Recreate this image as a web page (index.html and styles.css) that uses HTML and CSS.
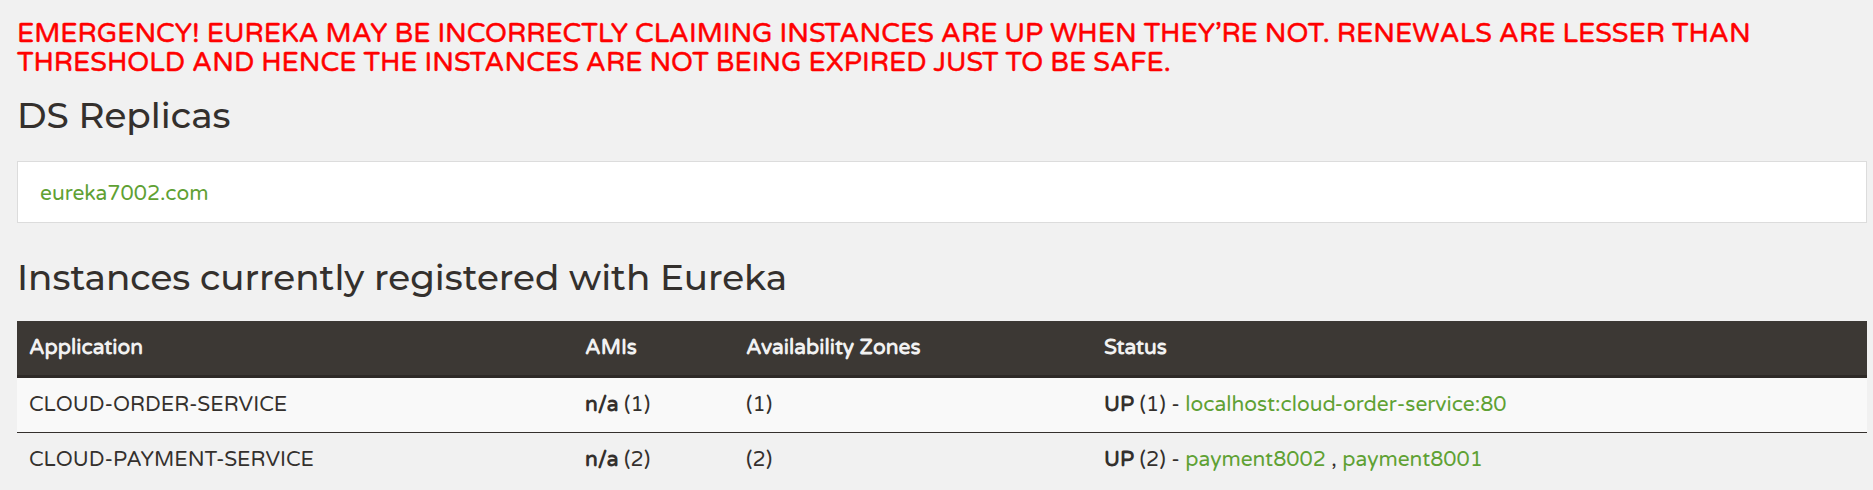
FILE: index.html
```html
<!DOCTYPE html>
<html lang="en">
<head>
<meta charset="utf-8">
<title>Eureka</title>
<link rel="stylesheet" href="styles.css">
</head>
<body>
<div class="page">
  <h4 class="emergency"><b>EMERGENCY! EUREKA MAY BE INCORRECTLY CLAIMING INSTANCES ARE UP WHEN THEY’RE NOT. RENEWALS ARE LESSER THAN THRESHOLD AND HENCE THE INSTANCES ARE NOT BEING EXPIRED JUST TO BE SAFE.</b></h4>

  <h1 class="title title-replicas">DS Replicas</h1>
  <div class="well">
    <ul class="list-unstyled">
      <li><a class="link" href="#">eureka7002.com</a></li>
    </ul>
  </div>

  <h1 class="title title-instances">Instances currently registered with Eureka</h1>
  <table class="instances">
    <colgroup>
      <col class="c-app">
      <col class="c-ami">
      <col class="c-zone">
      <col class="c-status">
    </colgroup>
    <thead>
      <tr>
        <th>Application</th>
        <th>AMIs</th>
        <th>Availability Zones</th>
        <th>Status</th>
      </tr>
    </thead>
    <tbody>
      <tr class="odd">
        <td>CLOUD-ORDER-SERVICE</td>
        <td><b>n/a</b> (1)</td>
        <td>(1)</td>
        <td><b>UP</b> (1) - <a class="link" href="#">localhost:cloud-order-service:80</a></td>
      </tr>
      <tr class="even">
        <td>CLOUD-PAYMENT-SERVICE</td>
        <td><b>n/a</b> (2)</td>
        <td>(2)</td>
        <td><b>UP</b> (2) - <a class="link" href="#">payment8002</a> , <a class="link" href="#">payment8001</a></td>
      </tr>
    </tbody>
  </table>
</div>
</body>
</html>
```
FILE: styles.css
```css
html, body {
  margin: 0;
  padding: 0;
}

body {
  background: #f1f1f1;
  color: #34302d;
  font-family: "Varela Round", "Open Sans", sans-serif;
  font-size: 21px;
  line-height: 30px;
}

.page {
  padding: 0 6px 0 17px;
  display: flex;
  flex-direction: column;
}

.emergency {
  margin: 20.3px 0 18.6px;
  font-size: 27px;
  line-height: 28.7px;
  font-weight: normal;
  color: #ff0000;
  font-family: "Varela Round", "Open Sans", sans-serif;
}

.emergency b {
  font-weight: normal;
  -webkit-text-stroke: 0.5px #ff0000;
}

.title {
  font-family: "Montserrat", "Open Sans", sans-serif;
  font-weight: 500;
  font-size: 35.8px;
  line-height: 39.6px;
  color: #34302d;
  margin: 0 0 25px;
}

.title-instances {
  margin-bottom: 24px;
}

.well {
  background: #ffffff;
  border: 1px solid #dcdcdc;
  padding: 17px 22px 13px;
  margin-bottom: 35px;
}

.list-unstyled {
  list-style: none;
  margin: 0;
  padding: 0;
}

.link {
  color: #5fa134;
  text-decoration: none;
}

.instances {
  width: 100%;
  border-collapse: collapse;
  table-layout: fixed;
}

.c-app { width: 556px; }
.c-ami { width: 161px; }
.c-zone { width: 358px; }
.c-status { width: auto; }

.instances th {
  background: #3c3834;
  color: #f1f1f1;
  font-weight: bold;
  text-align: left;
  padding: 12px;
  border-bottom: 3px solid #2e2a27;
}

.instances td {
  padding: 12px;
  text-align: left;
  vertical-align: top;
}

.instances tr.odd td {
  background: #f9f9f9;
}

.instances tr.even td {
  border-top: 1px solid #34302d;
}
```
